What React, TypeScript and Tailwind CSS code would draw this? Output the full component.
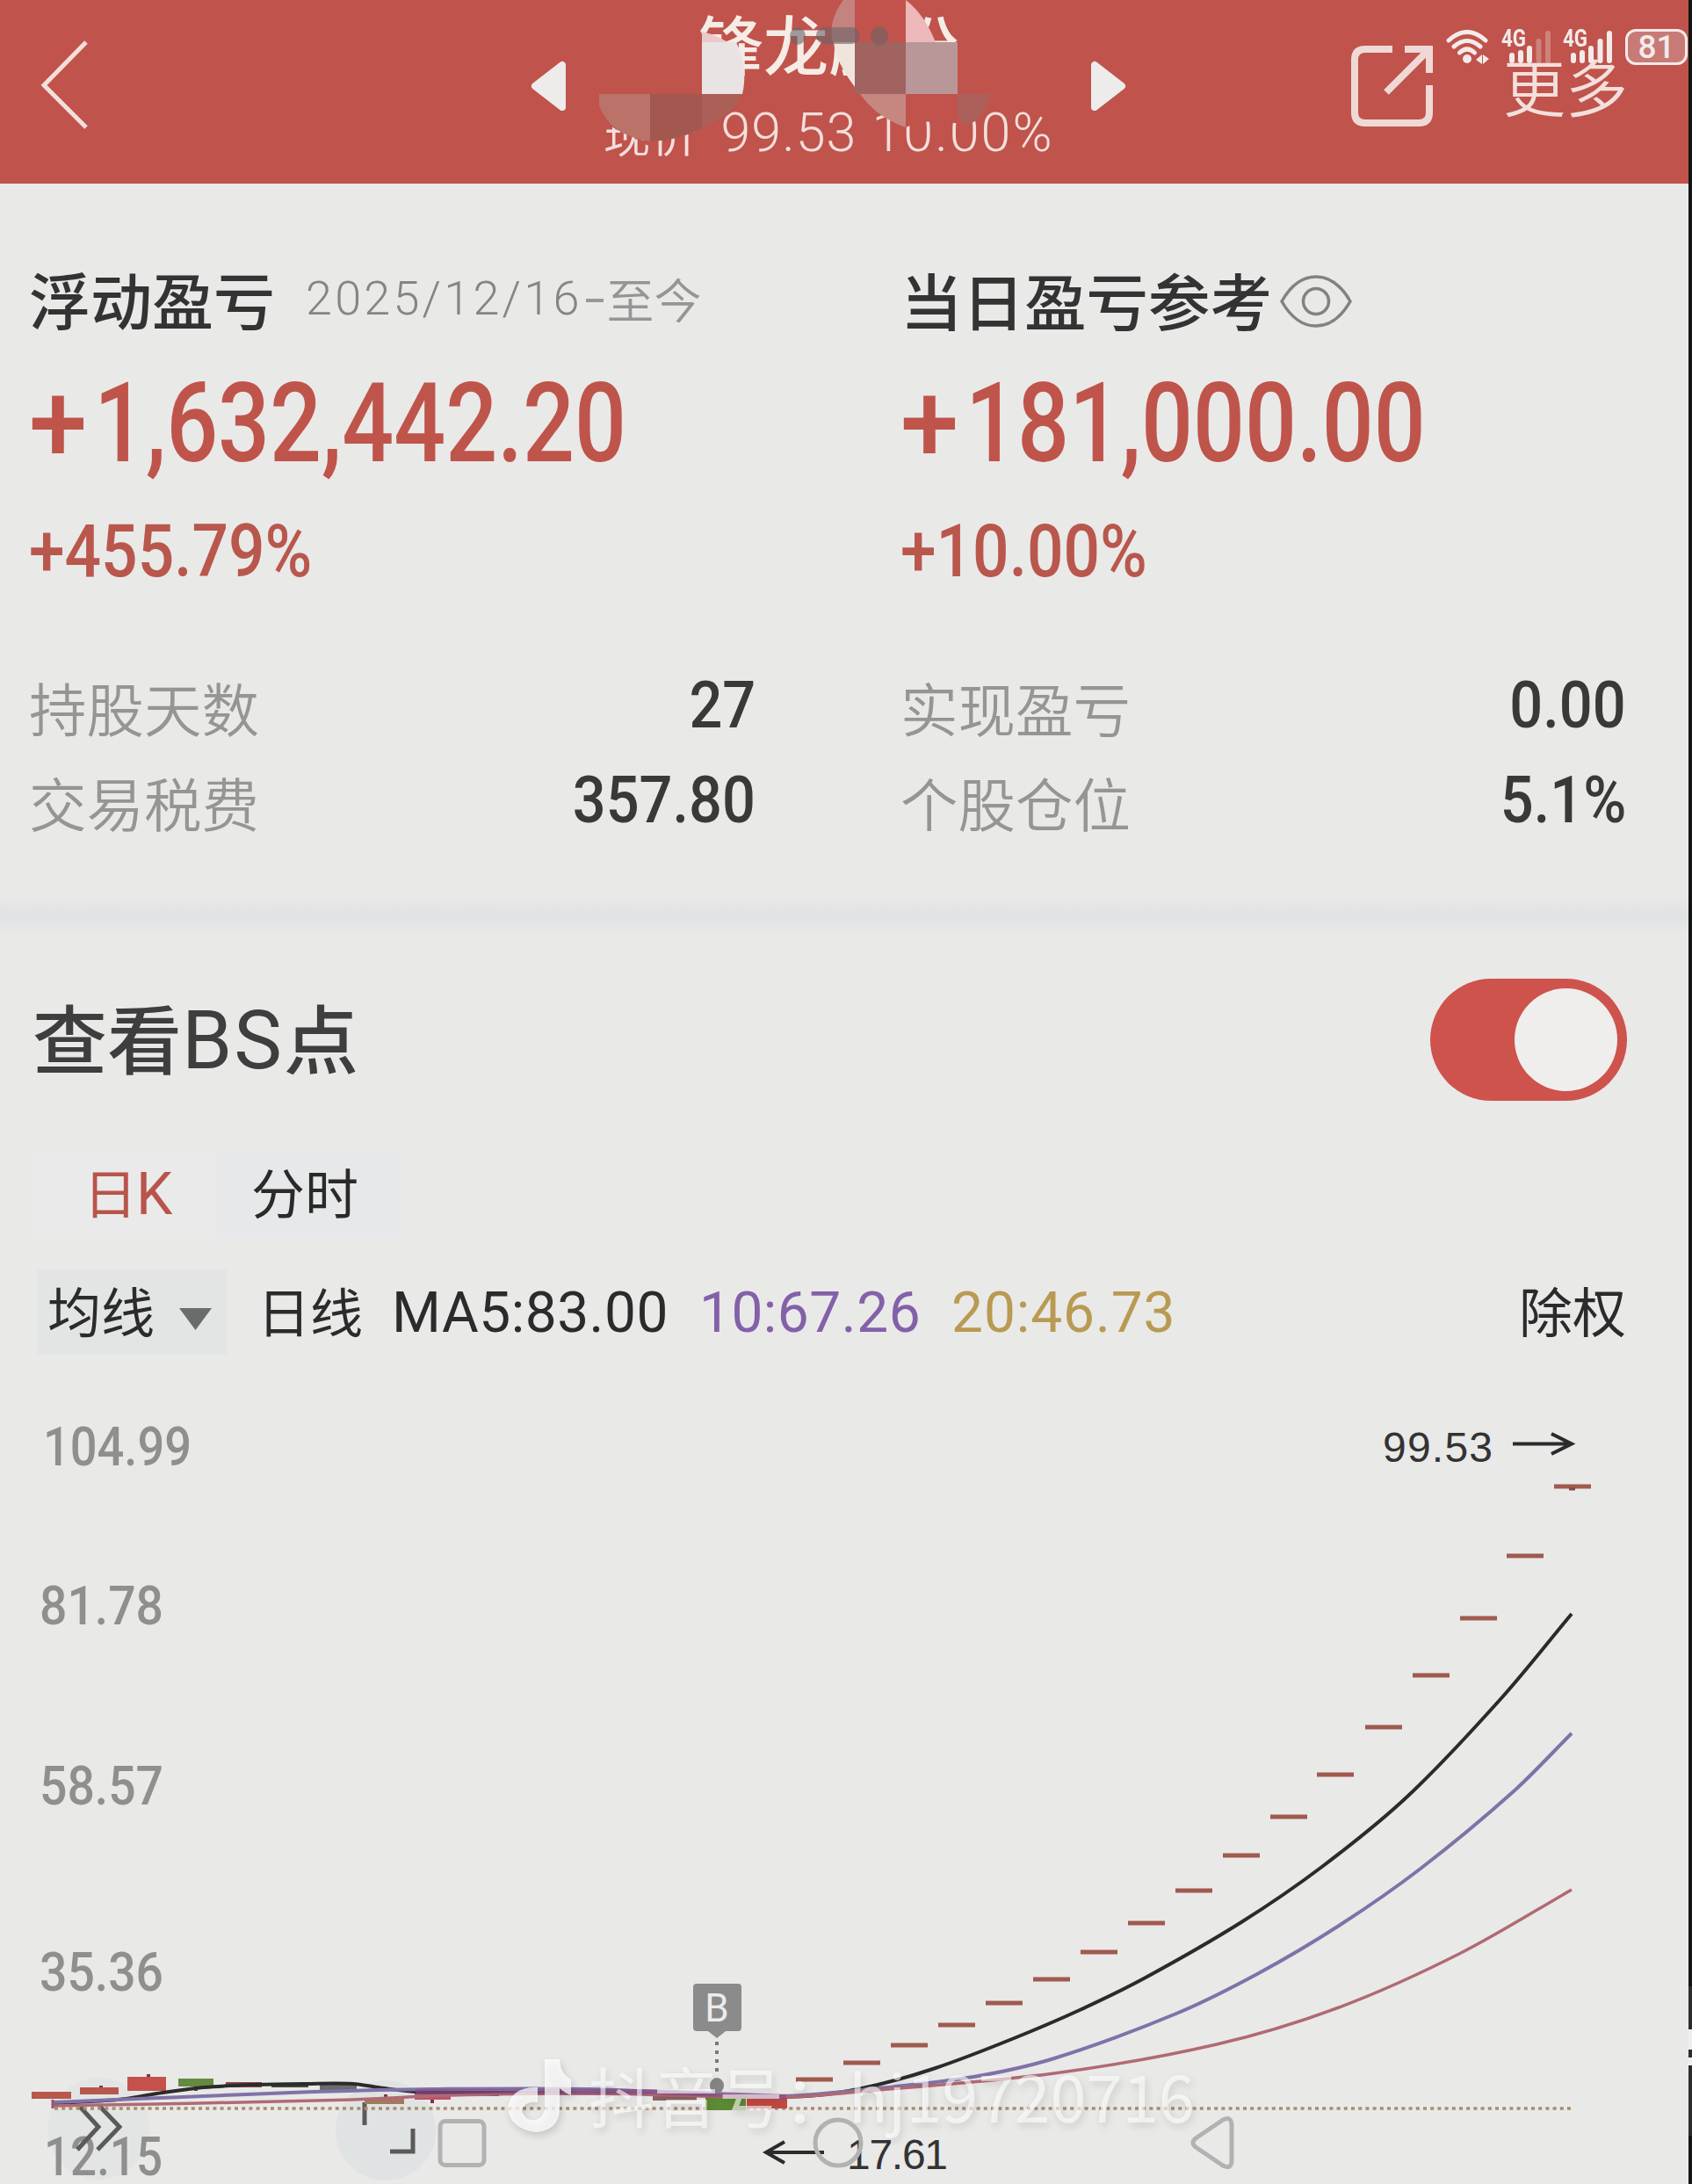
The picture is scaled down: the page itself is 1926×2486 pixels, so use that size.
import clsx from "clsx";

const cjk = "font-['Noto_Sans_CJK_SC',sans-serif]";
const num = "font-['Roboto',sans-serif]";

const priceLabels = [
  { text: "104.99", x: 49, y: 1668, w: 169 },
  { text: "81.78", x: 45, y: 1849, w: 141 },
  { text: "58.57", x: 45, y: 2054, w: 141 },
  { text: "35.36", x: 45, y: 2266, w: 141 },
  { text: "12.15", x: 50, y: 2476, w: 135 },
];

// one-price limit-up days, [center x, y]
const limitUps = [
  [927, 2367], [981, 2348], [1035, 2328], [1089, 2305], [1143, 2280],
  [1197, 2253], [1251, 2222], [1305, 2189], [1359, 2152], [1413, 2112],
  [1467, 2068], [1520, 2020], [1575, 1966], [1629, 1907], [1683, 1842],
  [1736, 1771], [1790, 1692],
];

const ma5 = [
  [60, 2394], [134, 2390], [179, 2383], [232, 2376], [290, 2373], [348, 2372],
  [402, 2372], [430, 2376], [473, 2381], [571, 2382], [741, 2383], [880, 2387],
  [940, 2384], [999, 2373], [1065, 2354], [1152, 2321], [1229, 2288], [1304, 2251],
  [1413, 2188], [1506, 2124], [1603, 2044], [1709, 1933], [1789, 1837],
];
const ma10 = [
  [60, 2393], [156, 2389], [232, 2386], [357, 2381], [491, 2378], [670, 2378],
  [880, 2386], [999, 2377], [1108, 2364], [1200, 2343], [1339, 2292], [1431, 2247],
  [1524, 2192], [1617, 2127], [1723, 2039], [1789, 1973],
];
const ma20 = [
  [60, 2397], [178, 2395], [402, 2390], [513, 2385], [670, 2383], [895, 2387],
  [999, 2379], [1200, 2360], [1385, 2327], [1524, 2285], [1663, 2223], [1789, 2151],
];

const candles = [
  { x: 36, y: 2381, w: 45, h: 8, fill: "#b9574b" },
  { x: 91, y: 2376, w: 44, h: 8, fill: "#b9574f" },
  { x: 145, y: 2364, w: 44, h: 16, fill: "#c4524b" },
  { x: 203, y: 2366, w: 40, h: 9, fill: "#648a3f" },
  { x: 257, y: 2370, w: 41, h: 6, fill: "#8d4646" },
  { x: 309, y: 2372, w: 42, h: 4, fill: "#3d4a36" },
  { x: 364, y: 2373, w: 42, h: 6, fill: "#6a6c6d" },
  { x: 415, y: 2388, w: 45, h: 7, fill: "#a3785f" },
  { x: 472, y: 2383, w: 41, h: 7, fill: "#bd5266" },
  { x: 526, y: 2381, w: 42, h: 5, fill: "#4f2340" },
  { x: 743, y: 2384, w: 50, h: 7, fill: "#8c6163" },
  { x: 803, y: 2387, w: 46, h: 15, fill: "#5f8a35" },
  { x: 850, y: 2387, w: 46, h: 13, fill: "#c24a42" },
];

// smooth path through the points
const curve = (pts: number[][]) => {
  let d = `M${pts[0][0]} ${pts[0][1]}`;
  for (let i = 0; i < pts.length - 1; i++) {
    const p0 = pts[i - 1] ?? pts[i];
    const [p1, p2] = [pts[i], pts[i + 1]];
    const p3 = pts[i + 2] ?? p2;
    const dx = (p2[0] - p1[0]) / 3;
    const m1 = (p2[1] - p0[1]) / (p2[0] - p0[0]);
    const m2 = (p3[1] - p1[1]) / (p3[0] - p1[0]);
    d += `C${p1[0] + dx} ${p1[1] + m1 * dx} ${p2[0] - dx} ${p2[1] - m2 * dx} ${p2[0]} ${p2[1]}`;
  }
  return d;
};

const Stat = ({ label, value }: { label: string; value: string }) => (
  <div className="flex h-[108px] items-center justify-between">
    <span className={clsx(cjk, "mt-[2px] text-[65.5px] leading-[80px] font-[350] text-[#959594]")}>{label}</span>
    <span className={clsx(num, "-mr-[2px] mb-[4px] origin-right scale-x-[.89] text-[75px] leading-[80px] font-medium text-[#3a3938]")}>
      {value}
    </span>
  </div>
);

const Profit = ({ amount, percent }: { amount: string; percent: string }) => (
  <>
    <p className={clsx(num, "mt-[37px] w-max origin-left scale-x-[.817] text-[127px] leading-[130px] font-medium text-[#bf544b]")}>
      <span className="mr-[20px] inline-block origin-left scale-x-115">+</span>
      {amount}
    </p>
    <p className={clsx(num, "mt-[36px] w-max origin-left scale-x-[.87] text-[84px] leading-[90px] font-medium text-[#b9574d]")}>
      +{percent}
    </p>
  </>
);

const Mosaic = () => (
  <svg className="absolute top-0 left-[680px]" width="450" height="170" viewBox="680 0 450 170">
    <g fill="#c1534c">
      <path d="M973 0H1031L1060 48V107H973Z" />
      <path d="M682 107H850Q835 134 800 145Q780 158 740 157Q700 155 682 130Z" />
      <path d="M1025 107H1127Q1120 136 1100 143Q1060 132 1031 145Z" />
    </g>
    <path d="M799 36Q818 40 834 52H799Z" fill="#ecc9c8" />
    <path d="M799 48H838Q852 78 845 107H799Z" fill="#e9e4e3" />
    <path d="M682 107H740V161Q694 154 682 120Z" fill="#ba7269" />
    <path d="M740 107H799V146Q772 160 740 161Z" fill="#a3584f" />
    <path d="M799 107H845Q832 134 799 146Z" fill="#ac5f57" />
    <path d="M960 0H973V48H948Q942 24 960 0Z" fill="#c4837e" />
    <path d="M949 48H973V99Q951 70 949 48Z" fill="#f0e5dd" />
    <rect x="973" y="48" width="58" height="59" fill="#a0635f" />
    <rect x="1031" y="48" width="59" height="59" fill="#b99799" />
    <path d="M1031 0Q1052 16 1065 48H1031Z" fill="#ecb8b9" />
    <path d="M979 107H1031V145Q998 134 979 107Z" fill="#c68781" />
    <path d="M1090 107H1127Q1120 136 1101 142Q1090 142 1090 125Z" fill="#ab605a" />
    <g fill="#6b6468" opacity=".6">
      <ellipse cx="908" cy="41" rx="9" ry="10" />
      <rect x="929" y="31" width="50" height="19" rx="9.5" />
      <ellipse cx="1001" cy="41" rx="10" ry="10.5" />
    </g>
  </svg>
);

const Signal = ({ weak }: { weak?: boolean }) => (
  <div className="relative h-[40px] w-[56px]">
    <span className={clsx(num, "absolute -top-px -left-px origin-left scale-x-[.8] text-[28px] leading-[22px] font-bold")}>4G</span>
    <svg className="absolute top-0 left-0" width="56" height="40" viewBox="0 0 56 40" stroke="currentColor" strokeWidth="6" strokeLinecap="round">
      <path d="M11 29V35M21 26V35M31 21V35" />
      <path d="M41.500 13V35M52 4V35" opacity={weak ? 0.3 : 1} />
    </svg>
  </div>
);

const StatusBar = () => (
  <div className="absolute top-[34px] left-[1646px] flex text-[#f3ebea]">
    <svg width="50" height="40" viewBox="0 0 50 40" fill="none" stroke="currentColor" strokeWidth="5" strokeLinecap="round">
      <path d="M3 12Q24 -7 45 12M9 19Q24 6 39 19M15.500 26Q24 18 32.500 26" />
      <circle cx="24" cy="33" r="5" fill="currentColor" stroke="none" />
      <path d="M34 34L41 28V39ZM42 28L49 33L42 39Z" fill="currentColor" stroke="none" />
    </svg>
    <div className="ml-[14px] flex gap-[14px]">
      <Signal weak />
      <Signal />
    </div>
    <div className={clsx(num, "-mt-px ml-[14px] flex h-[41px] w-[71px] items-center justify-center rounded-[12px] border-[3px] border-[#f3ebea] bg-[#c87a76] text-[37px] font-medium")}>
      81
    </div>
  </div>
);

const Header = () => (
  <header className="relative flex h-[209px] items-start bg-[#c0534b] text-[#f3dfdc]">
    <svg className="mt-[45px] ml-[45px]" width="56" height="104" fill="none" stroke="currentColor" strokeWidth="5">
      <path d="M53 3L5 52L53 100" />
    </svg>
    <svg className="mt-[69px] ml-[503px]" width="40" height="58" fill="#edecea" stroke="#edecea" strokeWidth="8" strokeLinejoin="round">
      <path d="M36 5V53L5 29Z" />
    </svg>
    <div className="flex w-[598px] flex-col items-center">
      <h1 className={clsx(cjk, "mt-[11px] text-[74px] leading-[74px] font-medium text-[#f5ece6]")}>锋龙股份</h1>
      <div className="mt-[31px] flex items-center">
        <span className={clsx(cjk, "text-[54px] leading-[70px] font-[350]")}>现价</span>
        <span className={clsx(num, "ml-[26px] text-[61px] leading-[70px] font-light tracking-[1px]")}>99.53</span>
        <span className={clsx(num, "ml-[17px] text-[61px] leading-[70px] font-light tracking-[2px]")}>10.00%</span>
      </div>
    </div>
    <svg className="mt-[69px]" width="40" height="58" fill="#edecea" stroke="#edecea" strokeWidth="8" strokeLinejoin="round">
      <path d="M4 5V53L35 29Z" />
    </svg>
    <svg className="mt-[48px] ml-[252px]" width="100" height="100" fill="none" stroke="#efd9d6" strokeWidth="8">
      <path d="M51 8H20Q8 8 8 20V80Q8 92 20 92H81Q93 92 93 80V49" />
      <path d="M65 8H93V35M91 10L44 57" />
    </svg>
    <span className={clsx(cjk, "mt-[56px] ml-[77px] text-[71px] leading-[80px] font-[350]")}>更多</span>
    <Mosaic />
    <StatusBar />
  </header>
);

const Summary = () => (
  <section className="grid grid-cols-[825px_824px] gap-x-[167px] pt-[91px] pl-[33px]">
    <div>
      <div className="flex items-center">
        <h2 className={clsx(cjk, "text-[70px] leading-[80px] font-medium text-[#333]")}>浮动盈亏</h2>
        <span className={clsx(num, "ml-[35px] flex items-center text-[54px] leading-[80px] font-light tracking-[3.2px] text-[#858585]")}>
          2025/12/16
          <i className="mx-[4px] mt-[4px] h-[4px] w-[20px] bg-[#999]" />
        </span>
        <span className={clsx(cjk, "text-[54px] leading-[76px] font-[350] text-[#959595]")}>至今</span>
      </div>
      <Profit amount="1,632,442.20" percent="455.79%" />
    </div>
    <div>
      <div className="flex items-center">
        <h2 className={clsx(cjk, "text-[70.5px] leading-[80px] font-medium text-[#333]")}>当日盈亏参考</h2>
        <svg className="mt-[6px] ml-[9px]" width="82" height="60" fill="none" stroke="#828282" strokeWidth="3.500">
          <path d="M2 30Q18 2 41 2T80 30Q64 58 41 58T2 30Z" />
          <circle cx="41" cy="30" r="14.500" />
        </svg>
      </div>
      <Profit amount="181,000.00" percent="10.00%" />
    </div>
    <div className="mt-[77px]">
      <Stat label="持股天数" value="27" />
      <Stat label="交易税费" value="357.80" />
    </div>
    <div className="mt-[77px]">
      <Stat label="实现盈亏" value="0.00" />
      <Stat label="个股仓位" value="5.1%" />
    </div>
  </section>
);

const Controls = () => (
  <section className="pt-[50px]">
    <div className="flex h-[139px] items-center justify-between pr-[70px] pl-[37px]">
      <h2 className={clsx(cjk, "mb-[4px] text-[85px] leading-[100px] font-medium text-[#3e3e3e]")}>
        查看<span className={clsx(num, "text-[92px] font-normal tracking-[2px]")}>BS</span>点
      </h2>
      <div className="flex h-[139px] w-[224px] items-center justify-end rounded-full bg-[#cd534c] pr-[11px]">
        <div className="size-[117px] rounded-full bg-[#efeeec]" />
      </div>
    </div>
    <div className="mt-[59px] ml-[37px] flex h-[96px] text-[61px]">
      <div className={clsx(cjk, "flex w-[209px] items-center bg-[#eaeaea] pb-[8px] pl-[58px] text-[#b9544b]")}>
        日<span className={clsx(num, "mt-[6px] -ml-px text-[66px]")}>K</span>
      </div>
      <div className={clsx(cjk, "flex w-[209px] items-center bg-[#e6e8e9] pb-[8px] pl-[40px] text-[#2a2a2a]")}>分时</div>
    </div>
    <div className="mt-[37px] flex h-[97px] items-center pr-[71px] pl-[42px] text-[#2b2b2b]">
      <div className={clsx(cjk, "flex h-[97px] w-[216px] items-center bg-[#e3e5e5] pb-[6px] pl-[12px] text-[61px]")}>
        均线
        <svg className="mt-[22px] ml-[28px]" width="37" height="25" fill="#696c6b">
          <path d="M0 0H37L18.500 25Z" />
        </svg>
      </div>
      <span className={clsx(cjk, "mb-[6px] ml-[35px] text-[60px]")}>日线</span>
      <span className={clsx(num, "mt-[2px] ml-[33px] text-[64px] tracking-[0.5px]")}>MA5:83.00</span>
      <span className={clsx(num, "mt-[2px] ml-[35px] text-[64px] tracking-[0.5px] text-[#8361a9]")}>10:67.26</span>
      <span className={clsx(num, "mt-[2px] ml-[35px] text-[64px] tracking-[0.9px] text-[#b99a52]")}>20:46.73</span>
      <span className={clsx(cjk, "mb-[6px] ml-auto text-[61px]")}>除权</span>
    </div>
  </section>
);

const Chart = () => (
  <svg className="block" width="1922" height="944" viewBox="0 1542 1922 944" fill="none">
    <circle cx="112" cy="2423" r="58" fill="#e3e5e5" />
    <circle cx="439" cy="2425" r="57" fill="#e0e3e3" />
    <g className={num} fontSize="61" fontWeight="500" fill="#8f8f8e">
      {priceLabels.map((p) => (
        <text key={p.text} x={p.x} y={p.y} textLength={p.w} lengthAdjust="spacingAndGlyphs">
          {p.text}
        </text>
      ))}
    </g>
    <g stroke="#5a5a5a" strokeWidth="5">
      <path d="M91 2398L112 2421L88 2447M113 2397L136 2421L111 2447" />
      <path d="M415 2393V2419M470 2423V2449H444" />
    </g>

    <path d="M62 2400H1789" stroke="#a98d6d" strokeWidth="3.500" strokeDasharray="4 4.200" />
    {candles.map((c) => (
      <rect key={c.x} x={c.x} y={c.y} width={c.w} height={c.h} fill={c.fill} />
    ))}
    <path d="M169 2361V2364M223 2375V2380M439 2384V2388M492 2390V2394M115 2374V2376" stroke="#7a3b36" strokeWidth="4" />

    {/* moving averages */}
    <path d={curve(ma5)} stroke="#2b2b2b" strokeWidth="4" />
    <path d={curve(ma10)} stroke="#8072a8" strokeWidth="4" />
    <path d={curve(ma20)} stroke="#b06a73" strokeWidth="3.500" />
    <path d="M473 2381H741L895 2387" stroke="#8a4c86" strokeWidth="6" opacity=".65" />
    <path d="M60 2390V2400" stroke="#9a5078" strokeWidth="3" />

    {limitUps.map(([x, y]) => (
      <path key={x} d={`M${x - 21} ${y}H${x + 21}`} stroke="#a05a4e" strokeWidth="5" />
    ))}
    <path d="M1786 1695H1793" stroke="#7a4a44" strokeWidth="3" />

    {/* buy marker */}
    <path d="M816 2324V2364" stroke="#7a7a7a" strokeWidth="4" strokeDasharray="4 6" />
    <ellipse cx="816" cy="2374" rx="8" ry="9" fill="#858585" />
    <path d="M793 2258H840Q844 2258 844 2262V2308Q844 2312 840 2312H826L816 2320L806 2312H793Q789 2312 789 2308V2262Q789 2258 793 2258Z" fill="#8b8b8b" />
    <text className={num} x="816" y="2301" fontSize="44" textAnchor="middle" fill="#ececec">B</text>

    <g className="font-['Liberation_Sans',sans-serif]" fontSize="48" fill="#333">
      <text x="1574" y="1664" textLength="125">99.53</text>
      <text x="964" y="2469" textLength="115">17.61</text>
    </g>
    <path d="M1722 1643.500H1788M1766 1632L1789 1643.500L1766 1655" stroke="#2b2b2b" strokeWidth="4" />
    <path d="M938 2450H873M893 2438L872 2450L893 2462" stroke="#2b2b2b" strokeWidth="4" />
  </svg>
);

const Watermark = () => (
  <div className="absolute top-[2332px] left-[576px] flex items-center text-white drop-shadow-[2px_4px_4px_rgba(0,0,0,0.2)]">
    <svg className="mt-[2px] opacity-75" width="74" height="84" fill="currentColor">
      <path d="M44 1H61Q62 18 74 24V42Q68 40 61 34V58Q60 82 34 84Q4 80 2 56Q6 32 36 33V50Q20 48 18 60Q22 72 34 70Q43 67 44 56Z" />
    </svg>
    <span className={clsx(cjk, "ml-[20px] text-[74px] leading-[104px] whitespace-nowrap opacity-60")}>抖音号：hj19720716</span>
  </div>
);

// android navigation keys
const NavKeys = () => (
  <svg className="absolute top-[2404px] left-[490px]" width="930" height="70" viewBox="490 2404 930 70" fill="none" stroke="#b2b2b2" strokeWidth="5" strokeLinejoin="round">
    <rect x="501" y="2414.500" width="50" height="50" rx="6" />
    <circle cx="954" cy="2439" r="26" />
    <path d="M1361 2434Q1355 2439 1361 2444L1392 2465Q1402 2470 1402 2459V2420Q1402 2408 1392 2413Z" />
  </svg>
);

const App = () => {
  return (
    <div className="relative flex h-[2486px] w-[1926px] overflow-hidden bg-[#e9e9e8]">
      <main className="w-[1922px] shrink-0">
        <Header />
        <Summary />
        <div className="mt-[54px] h-[44px] bg-linear-to-b from-[#e9e9e8] via-[#e0e2e4] to-[#e9e9e8]" />
        <Controls />
        <Chart />
      </main>
      <aside className="w-[4px] bg-[#121514] pt-[2261px]">
        <div className="h-[170px] bg-[#2c2e2e] pt-[49px]">
          <div className="h-[23px] bg-[#eee]" />
          <div className="mt-[9px] h-[9px] bg-[#eee]" />
        </div>
      </aside>
      <Watermark />
      <NavKeys />
    </div>
  );
};

export default App;
